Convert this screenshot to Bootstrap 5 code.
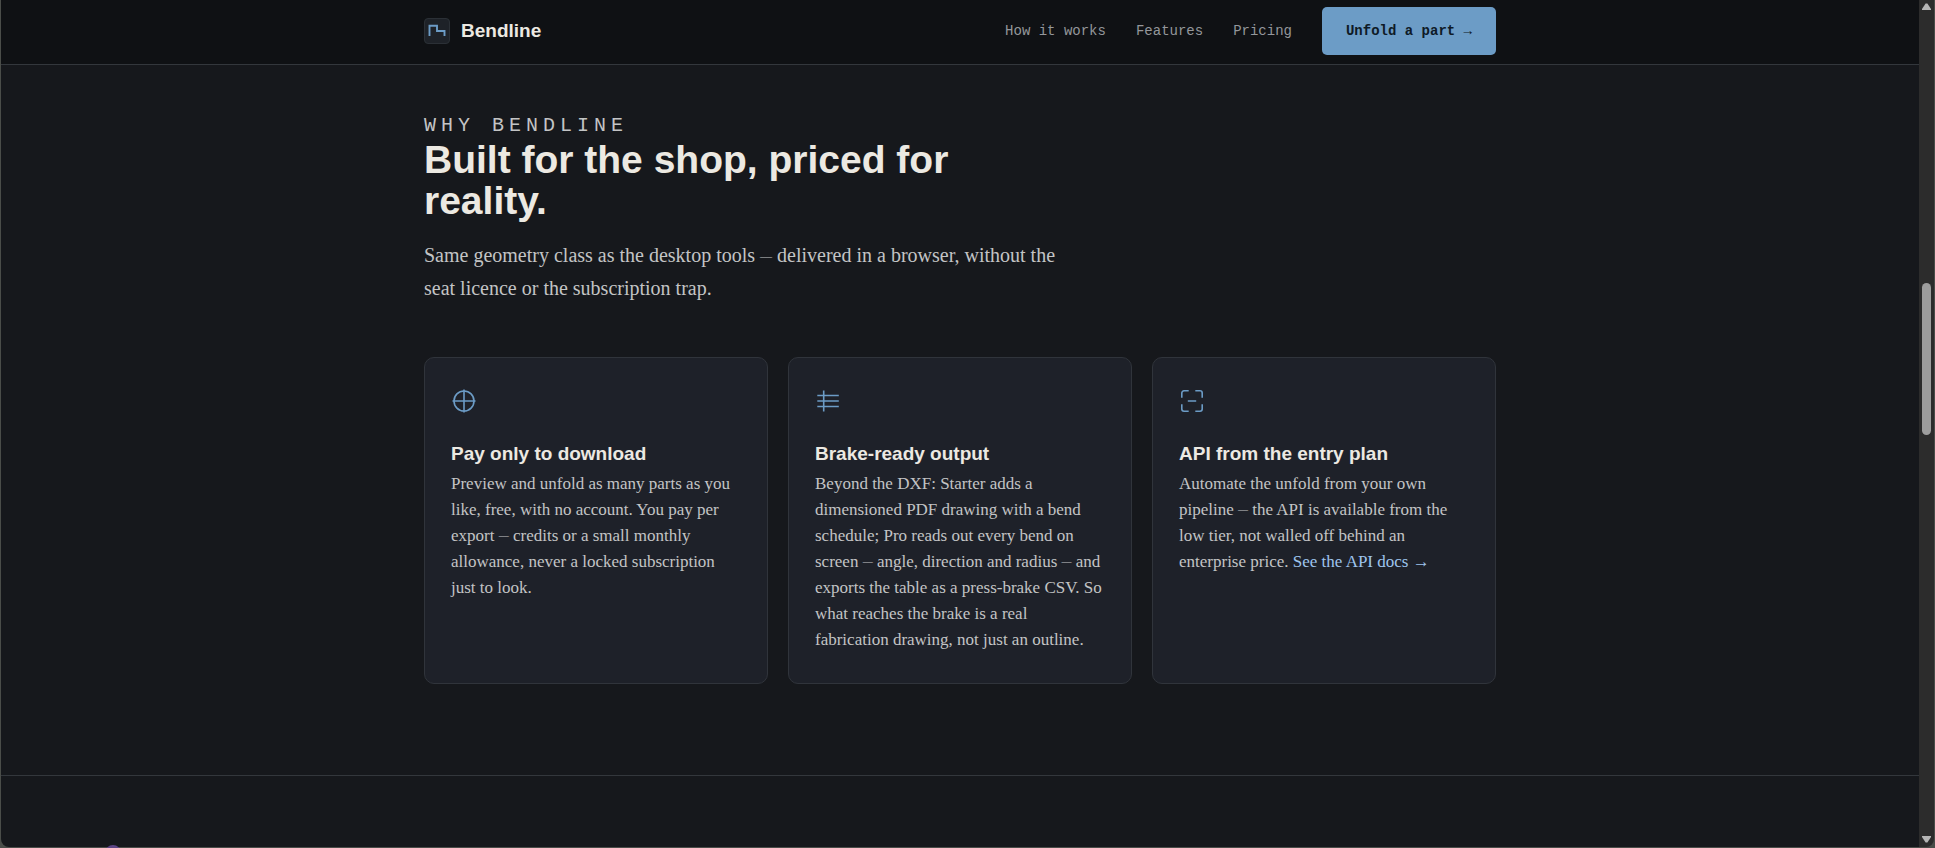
<!DOCTYPE html>
<html lang="en">
<head>
<meta charset="utf-8">
<meta name="viewport" content="width=device-width, initial-scale=1">
<title>Bendline</title>
<link href="https://cdn.jsdelivr.net/npm/bootstrap@5.3.0/dist/css/bootstrap.min.css" rel="stylesheet">
<style>
  :root { --line: #33373c; --accent: #6c9cc6; --ink: #ece9e2; --soft: #c3c4c5; --mono: "Liberation Mono", monospace; --sans: "Liberation Sans", sans-serif; }
  body { background: #4a4d49; color: var(--soft); font-family: "Liberation Serif", serif; }
  .app-window { height: 100vh; padding: 0 1px 1px; }
  .viewport { background: #16181c; border-bottom-left-radius: 8px; }
  .wrap { width: 100%; max-width: 1120px; margin: 0 auto; padding: 0 24px; }
  .site-header { background: #0f1114; border-bottom: 1px solid var(--line); padding-bottom: 2px; }
  .site-header .wrap { height: 62px; }
  .brand { gap: 11px; font: 700 19px/24px var(--sans); color: var(--ink); }
  .top-links { gap: 30px; font: 14px/20px var(--mono); }
  .top-links a { color: #94979b; }
  .btn-unfold { height: 48px; padding: 0 24px; border: 0; border-radius: 5px; background: var(--accent); color: #0e1a26; font: 700 14px/20px var(--mono); }
  .btn-unfold:hover { background: #7eabd2; }
  .why { padding: 48px 0 91px; border-bottom: 1px solid var(--line); }
  .eyebrow { font: 20px/26px var(--mono); letter-spacing: 5px; }
  .headline { max-width: 600px; margin-bottom: 18px; font: 700 39px/41px var(--sans); color: var(--ink); }
  .lede { max-width: 640px; margin-bottom: 52px; font-size: 20px; line-height: 33px; }
  .dash { font-size: 10px; line-height: 1; vertical-align: 2px; }
  .lede .dash { font-size: 12px; }
  .features { gap: 20px; }
  .feature { flex: 1 1 0; padding: 30px 26px; background: #1e2129; border: 1px solid #30343b; border-radius: 10px; }
  .feature svg { display: block; width: 26px; height: 26px; margin-bottom: 28px; }
  .feature h3 { margin-bottom: 5px; font: 700 19px/24px var(--sans); color: var(--ink); }
  .feature p { font-size: 17px; line-height: 26px; }
  .feature a { color: #9ec5ee; }
  .scroll-track { width: 15px; background: #2c2c2c; padding: 3px 3px 4px; border-bottom-right-radius: 8px; }
  .scroll-track svg { width: 9px; height: 7px; fill: #b5b5b5; flex: none; }
  .thumb { width: 9px; flex: 152 0 0; border-radius: 5px; background: #9d9d9d; }
  .space-above { flex: 273 0 0; }
  .space-below { flex: 401 0 0; }
  .dock-dot { position: absolute; left: 105px; bottom: -13px; width: 16px; height: 16px; border-radius: 50%; background: #5d4585; }
</style>
</head>
<body class="overflow-hidden">
<div class="app-window d-flex position-relative overflow-hidden">
  <div class="viewport flex-grow-1 overflow-hidden">
    <header class="site-header">
      <div class="wrap d-flex align-items-center justify-content-between">
        <a class="brand d-flex align-items-center text-decoration-none" href="#">
          <svg width="26" height="26" viewBox="0 0 26 26" fill="none" aria-hidden="true">
            <rect x=".5" y=".5" width="25" height="25" rx="3.5" fill="#1e2228" stroke="#2b3036"/>
            <path d="M5.5 18V7.7H13V13H20.5V18" stroke="#6c9cc6" stroke-width="1.9"/>
          </svg>
          Bendline
        </a>
        <nav class="top-links d-flex align-items-center">
          <a class="text-decoration-none" href="#how">How it works</a>
          <a class="text-decoration-none" href="#features">Features</a>
          <a class="text-decoration-none" href="#pricing">Pricing</a>
          <button type="button" class="btn btn-unfold">Unfold a part →</button>
        </nav>
      </div>
    </header>
    <main>
      <section class="why" id="features">
        <div class="wrap">
          <p class="eyebrow mb-0">WHY BENDLINE</p>
          <h2 class="headline">Built for the shop, priced for reality.</h2>
          <p class="lede">Same geometry class as the desktop tools <span class="dash">—</span> delivered in a browser, without the seat licence or the subscription trap.</p>
          <div class="features d-flex">
            <article class="feature">
              <svg viewBox="0 0 26 26" fill="none" stroke="#6c9cc6" stroke-width="1.6" aria-hidden="true"><circle cx="13" cy="13" r="10"/><path d="M13 1.5V24.5M1.5 13H24.5"/></svg>
              <h3>Pay only to download</h3>
              <p class="mb-0">Preview and unfold as many parts as you like, free, with no account. You pay per export <span class="dash">—</span> credits or a small monthly allowance, never a locked subscription just to look.</p>
            </article>
            <article class="feature">
              <svg viewBox="0 0 26 26" fill="none" stroke="#6c9cc6" stroke-width="1.6" aria-hidden="true"><path d="M2.3 7.5H23.8M2.3 13H23.8M2.3 18.5H23.8M8.7 2.4V23.6"/></svg>
              <h3>Brake-ready output</h3>
              <p class="mb-0">Beyond the DXF: Starter adds a dimensioned PDF drawing with a bend schedule; Pro reads out every bend on screen <span class="dash">—</span> angle, direction and radius <span class="dash">—</span> and exports the table as a press-brake CSV. So what reaches the brake is a real fabrication drawing, not just an outline.</p>
            </article>
            <article class="feature">
              <svg viewBox="0 0 26 26" fill="none" stroke="#6c9cc6" stroke-width="1.6" aria-hidden="true"><path d="M2.8 9.7V5A2.2 2.2 0 0 1 5 2.8H9.7M16.3 2.8H21A2.2 2.2 0 0 1 23.2 5V9.7M23.2 16.3V21A2.2 2.2 0 0 1 21 23.2H16.3M9.7 23.2H5A2.2 2.2 0 0 1 2.8 21V16.3M8.8 13H17.2"/></svg>
              <h3>API from the entry plan</h3>
              <p class="mb-0">Automate the unfold from your own pipeline <span class="dash">—</span> the API is available from the low tier, not walled off behind an enterprise price. <a class="text-decoration-none" href="#docs">See the API docs →</a></p>
            </article>
          </div>
        </div>
      </section>
    </main>
  </div>
  <div class="scroll-track d-flex flex-column align-items-center flex-shrink-0" aria-hidden="true">
    <svg viewBox="0 0 9 7"><path d="M3.6 .5H5.4L9 6V7H0V6Z"/></svg>
    <div class="space-above"></div>
    <div class="thumb"></div>
    <div class="space-below"></div>
    <svg viewBox="0 0 9 7"><path d="M3.6 6.5H5.4L9 1V0H0V1Z"/></svg>
  </div>
  <span class="dock-dot"></span>
</div>
<script src="https://cdn.jsdelivr.net/npm/bootstrap@5.3.0/dist/js/bootstrap.bundle.min.js"></script>
</body>
</html>
